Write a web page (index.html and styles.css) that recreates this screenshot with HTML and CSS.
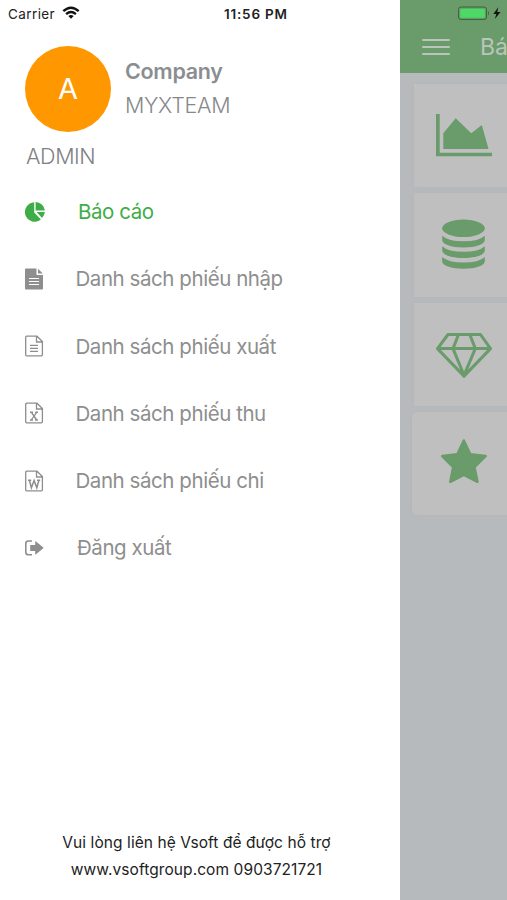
FILE: index.html
```html
<!DOCTYPE html>
<html lang="vi">
<head>
<meta charset="utf-8">
<title>Vsoft</title>
<link rel="stylesheet" href="styles.css">
</head>
<body>
<div class="app">
  <aside class="drawer">
    <div class="status">
      <span class="carrier">Carrier</span>
      <svg class="wifi" width="18" height="14" viewBox="0 0 18 14" fill="none" stroke="#111" stroke-width="2.4"><path d="M1.3 5.2Q9-1.7 16.7 5.2M4.1 8.1Q9 3.8 13.9 8.1"/><path d="M6.3 10Q9 7.8 11.7 10L9 12.8Z" fill="#111" stroke="none"/></svg>
      <span class="time">11:56 PM</span>
    </div>
    <div class="profile">
      <div class="avatar">A</div>
      <div class="who"><div class="company">Company</div><div class="team">MYXTEAM</div></div>
    </div>
    <div class="role">ADMIN</div>
    <nav class="menu">
      <a class="item active"><svg class="icon" viewBox="0 0 20 22"><path fill="currentColor" d="M9.2 1.2A9.8 9.8 0 1 0 15.9 18.6L9.2 11.5ZM10.6 1V9.6H19.9A9.9 9.9 0 0 0 10.6 1ZM11.6 11.1L17 17A9.6 9.6 0 0 0 19.9 11.1Z"/></svg><span class="label report">Báo cáo</span></a>
      <a class="item"><svg class="icon" viewBox="0 0 20 22"><path fill="currentColor" d="M1 .5H11.5V7H18V20.5Q18 21.5 17 21.5H1Q0 21.5 0 20.5V1.5Q0 .5 1 .5ZM13 .8L17.8 5.6H13Z"/><path stroke="#fff" stroke-width="1.2" d="M4 10.5H14M4 13.5H14M4 16.5H14"/></svg><span class="label import">Danh sách phiếu nhập</span></a>
      <a class="item"><svg class="icon line" viewBox="0 0 20 22"><path d="M1.6 1.2H12L17.4 6.6V19.8Q17.4 20.8 16.4 20.8H1.6Q.7 20.8.7 19.8V2.2Q.7 1.2 1.6 1.2ZM11.5 1.2V7H17.4M5 10.3H13M5 13.3H13M5 16.3H13"/></svg><span class="label export">Danh sách phiếu xuất</span></a>
      <a class="item"><svg class="icon line" viewBox="0 0 20 22"><path d="M1.6 1.2H12L17.4 6.6V19.8Q17.4 20.8 16.4 20.8H1.6Q.7 20.8.7 19.8V2.2Q.7 1.2 1.6 1.2ZM11.5 1.2V7H17.4"/><path d="M5 10.2H8M10.2 10.2H13M5 18H8M10 18H13M6.3 10.2L11.7 18" stroke-width="1.4"/><path d="M11.8 10.2L6.3 18"/></svg><span class="label collect">Danh sách phiếu thu</span></a>
      <a class="item"><svg class="icon line" viewBox="0 0 20 22"><path d="M1.6 1.2H12L17.4 6.6V19.8Q17.4 20.8 16.4 20.8H1.6Q.7 20.8.7 19.8V2.2Q.7 1.2 1.6 1.2ZM11.5 1.2V7H17.4"/><path d="M3 10.2H6.2M12 10.2H15.2M4.4 10.2L6.4 17.8L9.1 10.5L11.8 17.8L13.9 10.2" stroke-width="1.5"/></svg><span class="label spend">Danh sách phiếu chi</span></a>
      <a class="item"><svg class="icon line" viewBox="0 0 20 22"><path d="M7 4H3.4Q.8 4 .8 6.5V15.2Q.8 17.8 3.4 17.8H7" stroke-width="1.6"/><path fill="currentColor" stroke="none" d="M5.2 8.1H10.2V4.8Q10.2 4 11 4.6L18 10.3Q18.7 10.9 18 11.5L11 17.2Q10.2 17.8 10.2 17V13.9H5.2Z"/></svg><span class="label logout">Đăng xuất</span></a>
    </nav>
    <footer class="contact"><div class="help">Vui lòng liên hệ Vsoft để được hỗ trợ</div><div class="site">www.vsoftgroup.com 0903721721</div></footer>
  </aside>
  <main class="page">
    <header class="bar">
      <div class="power"><svg width="46" height="16" viewBox="457 5 46 16"><rect x="458.5" y="7" width="28" height="12.5" rx="2.5" fill="none" stroke="#3c6340"/><rect x="460.3" y="8.7" width="24.5" height="9" rx="1" fill="#4cd964"/><path fill="#3c6340" d="M488 11Q490 13 488 15.5Z"/><path fill="#111" d="M498.3 7.2L493.3 14H496.4L494.8 19L500.5 12.1H497.2Z"/></svg></div>
      <div class="heading"><svg width="28" height="18" viewBox="0 0 28 18" stroke="#bbc5bb" stroke-width="2" stroke-linecap="round"><path d="M1 2H27M1 9H27M1 16H27"/></svg><span class="title">Báo cáo</span></div>
    </header>
    <section class="cards">
      <div class="card"><svg viewBox="414 84 100 104"><path d="M436 114H439.7V152.8H492V156.3H436ZM443.3 149V133.2L455.7 118.3L471.3 133.2L481.8 125L488.5 149Z"/></svg></div>
      <div class="card"><svg viewBox="414 193.5 100 104"><ellipse cx="463.5" cy="228.8" rx="21.3" ry="8.7"/><path id="disk" d="M442.2 236.3Q448 241.8 463.5 241.8T484.8 236.3V240.5C484.8 244.8 476 248 463.5 248S442.2 244.8 442.2 240.5Z"/><use href="#disk" y="10.5"/><use href="#disk" y="21.3"/></svg></div>
      <div class="card"><svg viewBox="414 302.7 100 104"><path class="gem" d="M448 334.2H480.5L490.5 348.3L464 375.8L437.5 348.3ZM437.5 348.3H490.5M458.5 334.2L453 348.3L464 375L475.3 348.3L469.8 334.2"/></svg></div>
      <div class="card last"><svg viewBox="412 412 100 102"><path class="star" d="M463.8 440.5L470.3 454.2L485.6 456.1L474.5 467.2L477.5 481.8L463.8 474.8L450.3 481.8L453.2 467.2L442.2 456.1L457.3 454.2Z"/></svg></div>
    </section>
  </main>
</div>
</body>
</html>
```

FILE: styles.css
```css
* { box-sizing: border-box; }
body { margin: 0; font-family: Inter, sans-serif; }
svg { display: block; flex: none; }
.app { display: flex; width: 507px; height: 900px; overflow: hidden; background: #fff; }
.drawer { width: 400px; height: 900px; flex: none; display: flex; flex-direction: column; }
.status { display: flex; align-items: center; height: 28px; padding-left: 8px; color: #222; font-size: 13.5px; }
.carrier { width: 54px; letter-spacing: .4px; }
.wifi { margin-top: -2px; }
.time { margin-left: 144px; font-weight: 600; font-size: 13.5px; letter-spacing: .8px; white-space: nowrap; }
.profile { display: flex; padding: 18px 0 0 25px; height: 104px; }
.avatar { width: 86px; height: 86px; border-radius: 50%; background: #ff9800; color: #fff; font-size: 29px; line-height: 86px; text-align: center; }
.who { margin-left: 14px; padding-top: 8px; color: #86888a; font-size: 21.5px; line-height: 34px; letter-spacing: -.3px; }
.company { font-weight: 600; color: #8b8d90; }
.team { font-weight: 300; }
.role { height: 48px; padding-left: 26px; line-height: 49px; color: #7d8184; font-size: 21.5px; font-weight: 300; letter-spacing: -.4px; }
.menu { display: flex; flex-direction: column; margin-top: -2px; }
.item { display: flex; align-items: center; height: 67.25px; padding-left: 25px; color: #8e8e8e; }
.active { color: #3fad47; }
.icon { width: 20px; height: 22px; }
.line { fill: none; stroke: currentColor; stroke-width: 1.3; }
.label { margin-left: 30.5px; padding-top: 1px; font-size: 20.5px; line-height: 30px; letter-spacing: -.44px; white-space: nowrap; }
.report { margin-left: 33px; }
.logout { margin-left: 32px; }
.contact { margin-top: auto; height: 70px; text-align: center; color: #222; font-size: 15.5px; line-height: 26.5px; letter-spacing: .08px; white-space: nowrap; padding-right: 7px; }
.page { width: 107px; height: 900px; flex: none; overflow: hidden; background: #b7babc; }
.bar { height: 73px; background: #699b6b; }
.power { height: 36px; padding: 5px 0 0 57px; }
.heading { display: flex; align-items: center; height: 21px; padding-left: 22px; }
.title { margin-left: 30px; color: #bbc5bb; font-size: 23px; line-height: 28px; white-space: nowrap; }
.cards { display: flex; flex-direction: column; gap: 6px; padding: 11px 0 0 14px; }
.card { width: 100px; height: 103.3px; background: #bfbfbf; box-shadow: 0 0 3px #b2b4b5; fill: #699b6b; }
.card svg { width: 100px; height: 104px; }
.last { margin-left: -2px; border-radius: 5px; }
.last svg { height: 102px; }
.gem { fill: none; stroke: #699b6b; stroke-width: 3; stroke-linejoin: round; }
.star { stroke: #699b6b; stroke-width: 2.5; stroke-linejoin: round; }
```
